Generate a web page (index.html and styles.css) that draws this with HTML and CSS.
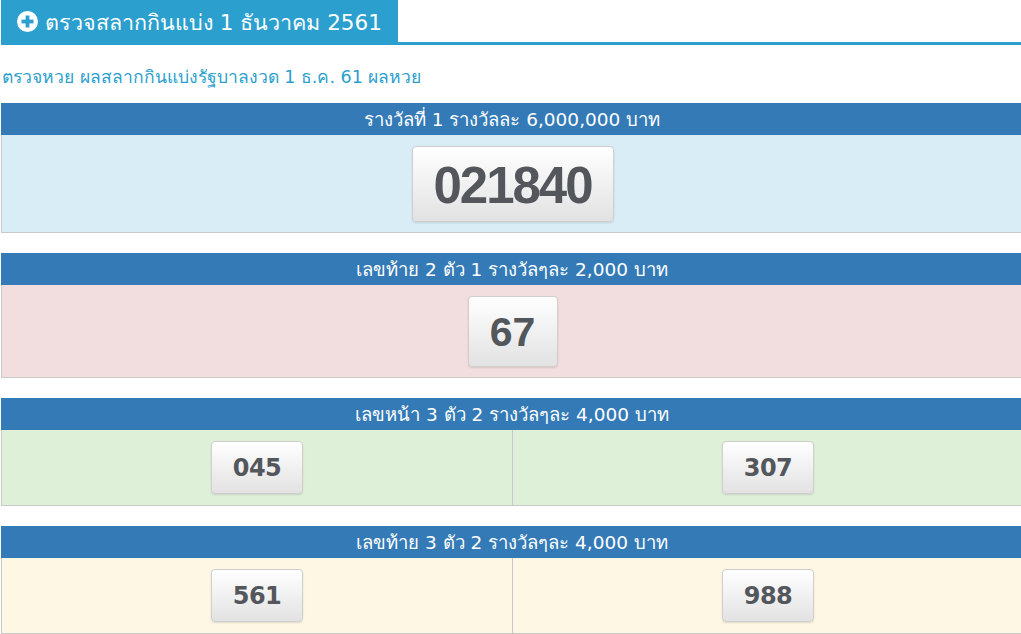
FILE: index.html
```html
<!DOCTYPE html>
<html lang="th">
<head>
<meta charset="utf-8">
<title>ตรวจสลากกินแบ่ง 1 ธันวาคม 2561</title>
<link rel="stylesheet" href="styles.css">
</head>
<body>
<div class="page">
  <div class="topbar">
    <div class="tab">
      <svg class="tab-icon" width="21" height="21" viewBox="0 0 21 21">
        <circle cx="10.5" cy="10.5" r="10.5" fill="#fff"/>
        <rect x="8.6" y="4.5" width="3.8" height="12" fill="#2b9fce"/>
        <rect x="4.5" y="8.6" width="12" height="3.8" fill="#2b9fce"/>
      </svg>
      <span class="tab-title">ตรวจสลากกินแบ่ง 1 ธันวาคม 2561</span>
    </div>
  </div>
  <p class="subtitle">ตรวจหวย ผลสลากกินแบ่งรัฐบาลงวด 1 ธ.ค. 61 ผลหวย</p>

  <section class="prize">
    <div class="prize-head">รางวัลที่ 1 รางวัลละ 6,000,000 บาท</div>
    <div class="prize-body info">
      <div class="cell"><span class="num num-xl">021840</span></div>
    </div>
  </section>

  <section class="prize">
    <div class="prize-head">เลขท้าย 2 ตัว 1 รางวัลๆละ 2,000 บาท</div>
    <div class="prize-body danger">
      <div class="cell"><span class="num num-lg">67</span></div>
    </div>
  </section>

  <section class="prize">
    <div class="prize-head">เลขหน้า 3 ตัว 2 รางวัลๆละ 4,000 บาท</div>
    <div class="prize-body success split">
      <div class="cell cell-md"><span class="num num-md">045</span></div>
      <div class="cell cell-md"><span class="num num-md">307</span></div>
    </div>
  </section>

  <section class="prize">
    <div class="prize-head">เลขท้าย 3 ตัว 2 รางวัลๆละ 4,000 บาท</div>
    <div class="prize-body warning split">
      <div class="cell cell-md"><span class="num num-md">561</span></div>
      <div class="cell cell-md"><span class="num num-md">988</span></div>
    </div>
  </section>
</div>
</body>
</html>
```

FILE: styles.css
```css
html, body {
  margin: 0;
  padding: 0;
  overflow: hidden;
  background: #fff;
}

body {
  font-family: Tahoma, "DejaVu Sans", "Noto Sans", sans-serif;
  color: #333;
}

.page {
  padding-left: 1px;
  width: 1022px;
}

.topbar {
  height: 42px;
  border-bottom: 3px solid #2b9fce;
  border-top: 1px solid #f0f0f0;
  margin-top: -1px;
  display: flex;
}

.tab {
  background: #2b9fce;
  height: 45px;
  display: flex;
  align-items: center;
  gap: 7px;
  padding: 0 16px;
  width: 397px;
  box-sizing: border-box;
  color: #fff;
}

.tab-icon {
  flex: none;
  margin-bottom: 2px;
}

.tab-title {
  font-size: 21.5px;
  white-space: nowrap;
  line-height: 1;
}

.subtitle {
  margin: 21px 0 0 1px;
  height: 37px;
  font-size: 17.5px;
  line-height: 22px;
  color: #2b9fce;
}

.prize {
  margin-bottom: 20px;
}

.prize-head {
  background: #337ab7;
  color: #fff;
  height: 32px;
  line-height: 34px;
  text-align: center;
  font-size: 18.5px;
  white-space: nowrap;
}

.prize-body {
  display: flex;
  border-left: 1px solid #c8c8c8;
  border-bottom: 1px solid #c8c8c8;
}

.info { background: #d9edf7; }
.danger { background: #f2dede; }
.success { background: #dff0d8; }
.warning { background: #fdf7e3; }

.cell {
  flex: 1;
  display: flex;
  justify-content: center;
  padding: 11px 0 10px;
}

.cell-md {
  padding-bottom: 11px;
}

.split .cell + .cell {
  border-left: 1px solid #c8c8c8;
}

.num {
  display: flex;
  align-items: center;
  justify-content: center;
  box-sizing: border-box;
  border: 1px solid #cfcfcf;
  border-radius: 4px;
  background: linear-gradient(to bottom, #ffffff 0%, #e2e2e2 100%);
  box-shadow: 0 1px 2px rgba(0, 0, 0, 0.12);
  color: #53575c;
  font-weight: bold;
}

.num-xl {
  width: 202px;
  height: 76px;
  font-family: "Liberation Sans", Arial, sans-serif;
  font-size: 51px;
  letter-spacing: -2px;
  padding-top: 2px;
}

.num-lg {
  width: 90px;
  height: 71px;
  font-family: "Liberation Sans", Arial, sans-serif;
  font-size: 41px;
  padding-top: 2px;
}

.num-md {
  width: 92px;
  height: 53px;
  font-family: "DejaVu Sans", Verdana, sans-serif;
  font-size: 24px;
  letter-spacing: -0.5px;
}
```
